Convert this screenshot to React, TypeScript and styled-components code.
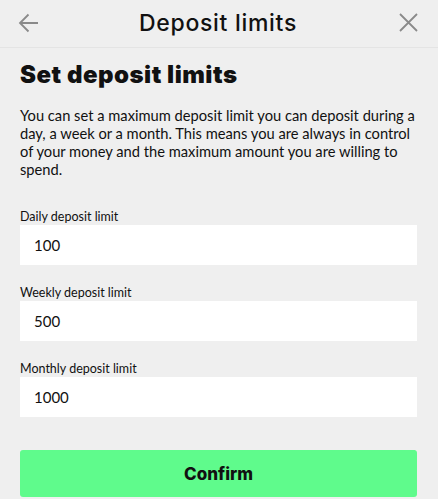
import styled, { createGlobalStyle } from 'styled-components'

const Global = createGlobalStyle`
  html, body {
    margin: 0;
    padding: 0;
    background: #efefef;
  }
  * {
    box-sizing: border-box;
  }
`

const Page = styled.div`
  min-height: 499px;
  background: #efefef;
  font-family: Lato, 'Liberation Sans', sans-serif;
  color: #111;
`

const Header = styled.header`
  height: 48px;
  display: flex;
  align-items: center;
  justify-content: space-between;
  padding: 0 19px 2px 17px;
  border-bottom: 1px solid #e4e4e4;
`

const IconButton = styled.button`
  width: 22px;
  height: 22px;
  padding: 0;
  border: 0;
  background: none;
  display: flex;
  align-items: center;
  justify-content: center;
  color: #8a8a8a;
`

const HeaderTitle = styled.h1`
  margin: 0;
  font-family: Inter, 'Liberation Sans', sans-serif;
  font-size: 23px;
  font-weight: 500;
  letter-spacing: 0.7px;
`

const Content = styled.main`
  padding: 12px 21px 0 20px;
`

const Title = styled.h2`
  margin: 0;
  font-family: Inter, 'Liberation Sans', sans-serif;
  font-size: 24px;
  line-height: 30px;
  font-weight: 900;
  letter-spacing: 0.5px;
`

const Intro = styled.p`
  margin: 16px 0 30px;
  font-size: 14.7px;
  line-height: 18px;
  color: #111;
`

const Field = styled.label`
  display: block;
  margin-bottom: 19px;
`

const FieldLabel = styled.span`
  display: block;
  font-size: 12.5px;
  line-height: 17px;
  color: #111;
`

const Input = styled.input`
  display: block;
  width: 100%;
  height: 40px;
  border: 0;
  padding: 0 14px;
  background: #fff;
  font-family: inherit;
  font-size: 15px;
  color: #111;
  outline: none;
`

const ConfirmButton = styled.button`
  display: block;
  width: 100%;
  height: 47px;
  margin-top: 33px;
  border: 0;
  border-radius: 3px;
  background: #5ffb8c;
  font-family: Inter, 'Liberation Sans', sans-serif;
  font-size: 17px;
  font-weight: 800;
  color: #111;
`

const limits = [
  { label: 'Daily deposit limit', value: '100' },
  { label: 'Weekly deposit limit', value: '500' },
  { label: 'Monthly deposit limit', value: '1000' },
]

export default function App() {
  return (
    <Page>
      <Global />
      <Header>
        <IconButton aria-label="Back">
          <svg width="21" height="20" viewBox="0 0 21 20" fill="none" stroke="currentColor" strokeWidth="1.8">
            <path d="M20 10H2M10.5 1.5L2 10l8.5 8.5" />
          </svg>
        </IconButton>
        <HeaderTitle>Deposit limits</HeaderTitle>
        <IconButton aria-label="Close">
          <svg width="19" height="19" viewBox="0 0 19 19" fill="none" stroke="currentColor" strokeWidth="1.8">
            <path d="M1 1l17 17M18 1L1 18" />
          </svg>
        </IconButton>
      </Header>
      <Content>
        <Title>Set deposit limits</Title>
        <Intro>
          You can set a maximum deposit limit you can deposit during a day, a week or a month. This
          means you are always in control of your money and the maximum amount you are willing to
          spend.
        </Intro>
        {limits.map((l) => (
          <Field key={l.label}>
            <FieldLabel>{l.label}</FieldLabel>
            <Input defaultValue={l.value} />
          </Field>
        ))}
        <ConfirmButton>Confirm</ConfirmButton>
      </Content>
    </Page>
  )
}
